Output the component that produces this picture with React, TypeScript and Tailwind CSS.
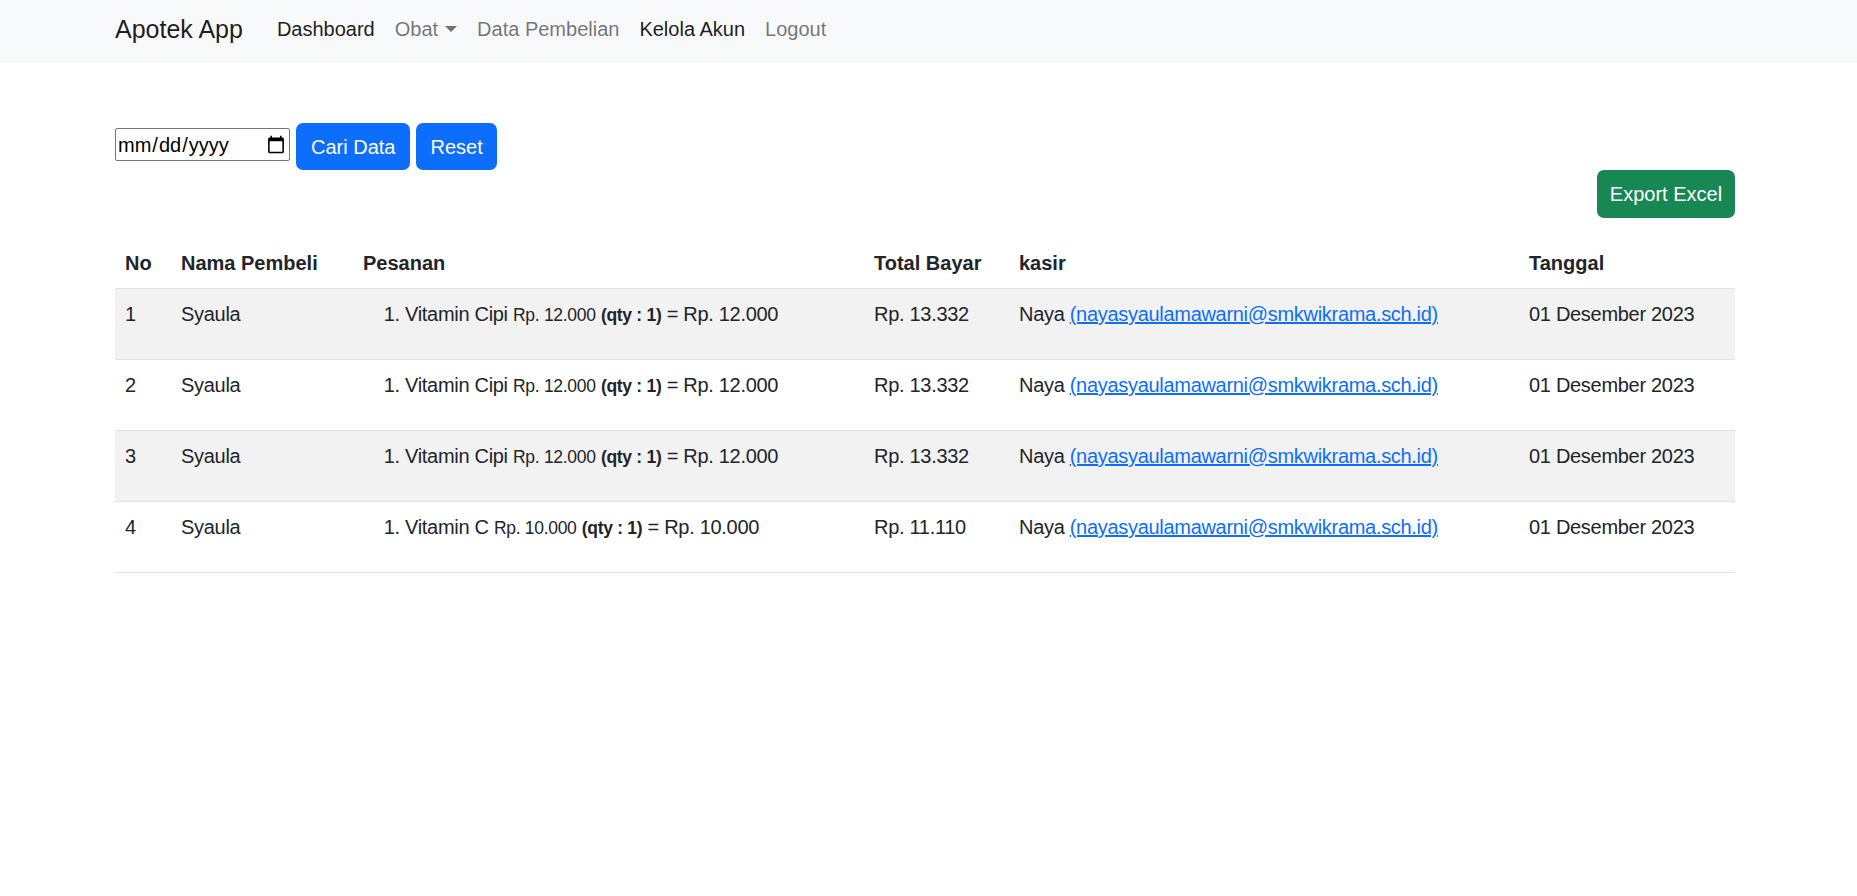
import React from "react";

const rows = [
  { no: 1, nama: "Syaula", obat: "Vitamin Cipi", harga: "Rp. 12.000", qty: 1, sub: "Rp. 12.000", total: "Rp. 13.332" },
  { no: 2, nama: "Syaula", obat: "Vitamin Cipi", harga: "Rp. 12.000", qty: 1, sub: "Rp. 12.000", total: "Rp. 13.332" },
  { no: 3, nama: "Syaula", obat: "Vitamin Cipi", harga: "Rp. 12.000", qty: 1, sub: "Rp. 12.000", total: "Rp. 13.332" },
  { no: 4, nama: "Syaula", obat: "Vitamin C", harga: "Rp. 10.000", qty: 1, sub: "Rp. 10.000", total: "Rp. 11.110" },
];

function Navbar() {
  return (
    <nav className="h-[63px] bg-[#f8f9fa] flex items-center pb-[5px]">
      <div className="ml-[115px] flex items-center">
        <a href="#" className="text-[25px] leading-[38px] text-[rgba(0,0,0,0.9)] mr-[24px]">
          Apotek App
        </a>
        <ul className="flex items-center text-[20px] leading-[30px]">
          <li><a href="#" className="block px-[10px] text-[rgba(0,0,0,0.9)]">Dashboard</a></li>
          <li>
            <a href="#" className="flex items-center px-[10px] text-[rgba(0,0,0,0.55)]">
              Obat
              <span className="ml-[7px] inline-block w-0 h-0 border-t-[6px] border-t-[rgba(0,0,0,0.55)] border-x-[6px] border-x-transparent"></span>
            </a>
          </li>
          <li><a href="#" className="block px-[10px] text-[rgba(0,0,0,0.55)]">Data Pembelian</a></li>
          <li><a href="#" className="block px-[10px] text-[rgba(0,0,0,0.9)]">Kelola Akun</a></li>
          <li><a href="#" className="block pl-[10px] pr-[10px] text-[rgba(0,0,0,0.55)]">Logout</a></li>
        </ul>
      </div>
    </nav>
  );
}

export default function App() {
  return (
    <div className="min-h-screen bg-white text-[#212529] font-['Liberation_Sans',Arial,sans-serif] text-[20px] leading-[30px]">
      <Navbar />

      <div className="ml-[115px] w-[1620px] mt-[60px]">
        {/* filter */}
        <form className="flex items-center gap-[6px]" onSubmit={(e) => e.preventDefault()}>
          <input
            type="date"
            className="w-[175px] h-[33px] mb-[4px] border border-[#767676] rounded-[2px] px-[1px] text-[20px] text-black"
          />
          <button className="h-[47px] px-[15px] rounded-[7px] bg-[#0d6efd] text-white">Cari Data</button>
          <button className="h-[47px] px-[14px] rounded-[7px] bg-[#0d6efd] text-white">Reset</button>
        </form>

        <div className="flex justify-end">
          <button className="h-[48px] w-[138px] rounded-[7px] bg-[#198754] text-white">Export Excel</button>
        </div>

        {/* tabel pembelian */}
        <table className="w-full table-fixed mt-[20px]">
          <thead>
            <tr className="border-b border-[#dee2e6] text-left font-bold">
              <th className="w-[56px] px-[10px] py-[10px]">No</th>
              <th className="w-[182px] px-[10px] py-[10px]">Nama Pembeli</th>
              <th className="w-[511px] px-[10px] py-[10px]">Pesanan</th>
              <th className="w-[145px] px-[10px] py-[10px]">Total Bayar</th>
              <th className="w-[510px] px-[10px] py-[10px]">kasir</th>
              <th className="w-[216px] px-[10px] py-[10px]">Tanggal</th>
            </tr>
          </thead>
          <tbody className="tracking-[-0.3px]">
            {rows.map((r, i) => (
              <tr key={r.no} className={`border-b border-[#dee2e6] align-top ${i % 2 === 0 ? "bg-[#f2f2f2]" : "bg-white"}`}>
                <td className="px-[10px] py-[10px]">{r.no}</td>
                <td className="px-[10px] py-[10px]">{r.nama}</td>
                <td className="px-[10px] py-[10px]">
                  <ol className="list-decimal pl-[42px] mb-[20px]">
                    <li className="h-[30px]">
                      {r.obat} <small className="text-[17.5px] leading-none">{r.harga}</small>{" "}
                      <small className="text-[17.5px] leading-none"><b>(qty : {r.qty})</b></small> = {r.sub}
                    </li>
                  </ol>
                </td>
                <td className="px-[10px] py-[10px]">{r.total}</td>
                <td className="px-[10px] py-[10px]">
                  Naya <a href="#" className="text-[#0d6efd] underline">(nayasyaulamawarni@smkwikrama.sch.id)</a>
                </td>
                <td className="px-[10px] py-[10px]">01 Desember 2023</td>
              </tr>
            ))}
          </tbody>
        </table>
      </div>
    </div>
  );
}
